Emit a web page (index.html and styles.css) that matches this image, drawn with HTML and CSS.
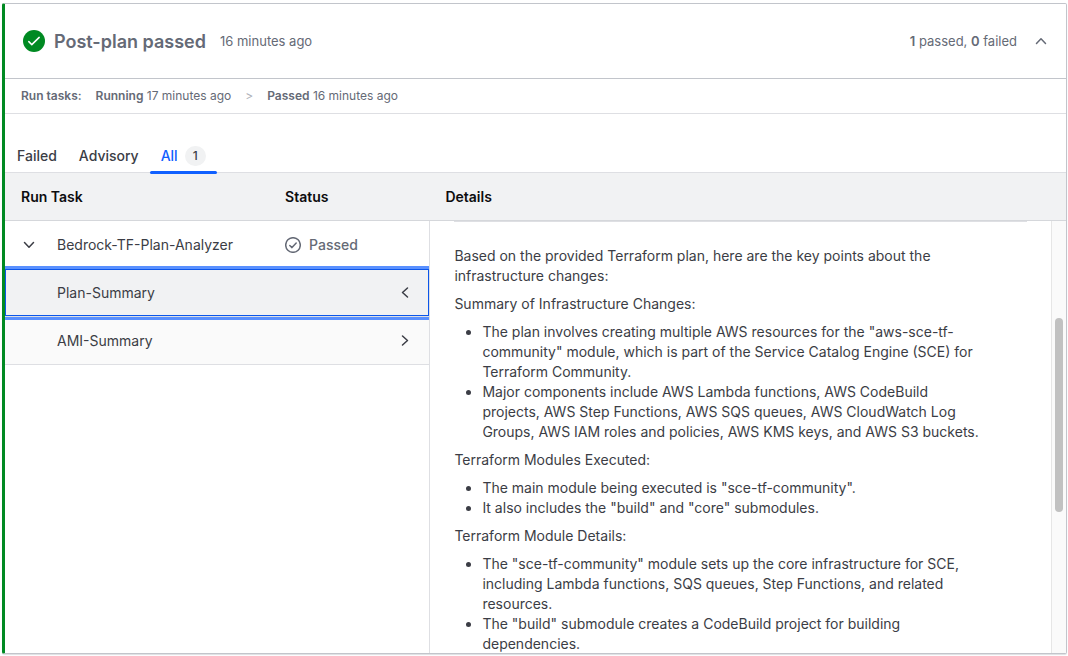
FILE: index.html
```html
<!DOCTYPE html>
<html lang="en">
<head>
<meta charset="utf-8">
<meta name="viewport" content="width=device-width, initial-scale=1">
<title>Post-plan run tasks</title>
<link rel="stylesheet" href="styles.css">
</head>
<body>
<main class="card">
  <header class="card-header">
    <svg class="status-badge" viewBox="0 0 22 22" aria-hidden="true"><circle cx="11" cy="11" r="11" fill="#008a22"/><path d="M5.800 11.600l3 3 7.400-7.200" fill="none" stroke="#fff" stroke-width="1.5" stroke-linecap="round" stroke-linejoin="round"/></svg>
    <h1 class="title">Post-plan passed</h1>
    <span class="time">16 minutes ago</span>
    <span class="totals"><b>1</b> passed, <b>0</b> failed</span>
    <button class="icon-button" type="button" aria-label="Collapse">
      <svg class="icon" viewBox="0 0 16 16"><path d="M3.500 10.500L8 5.800l4.500 4.700"/></svg>
    </button>
  </header>

  <div class="timeline">
    <b class="timeline-label">Run tasks:</b>
    <span><b>Running</b> 17 minutes ago</span>
    <span class="separator">&gt;</span>
    <span><b>Passed</b> 16 minutes ago</span>
  </div>

  <nav class="tabs" role="tablist">
    <button class="tab" type="button" role="tab">Failed</button>
    <button class="tab" type="button" role="tab">Advisory</button>
    <button class="tab tab-active" type="button" role="tab" aria-selected="true">All <span class="count">1</span></button>
  </nav>

  <div class="panes">
    <section class="tasks">
      <table class="task-table">
        <thead>
          <tr><th class="col-task" scope="col">Run Task</th><th scope="col">Status</th></tr>
        </thead>
        <tbody>
          <tr>
            <td>
              <div class="task">
                <button class="icon-button dark" type="button" aria-label="Toggle outcomes">
                  <svg class="icon" viewBox="0 0 16 16"><path d="M3.500 5.500L8 10.200l4.500-4.700"/></svg>
                </button>
                <span>Bedrock-TF-Plan-Analyzer</span>
              </div>
            </td>
            <td>
              <div class="status">
                <svg class="icon" viewBox="0 0 16 16"><circle cx="8" cy="8" r="7.300"/><path d="M4.800 8.500l2.200 2.100 4.200-4.600"/></svg>
                Passed
              </div>
            </td>
          </tr>
          <tr>
            <td class="outcome-cell selected" colspan="2">
              <button class="outcome" type="button">Plan-Summary
                <svg class="icon" viewBox="0 0 16 16"><path d="M10.500 3L5.500 7.500l5 4.500"/></svg>
              </button>
            </td>
          </tr>
          <tr>
            <td class="outcome-cell" colspan="2">
              <button class="outcome" type="button">AMI-Summary
                <svg class="icon" viewBox="0 0 16 16"><path d="M5.500 3l5 4.500-5 4.500"/></svg>
              </button>
            </td>
          </tr>
        </tbody>
      </table>
    </section>

    <section class="details">
      <h2 class="details-heading">Details</h2>
      <div class="details-body">
        <article class="summary">
          <hr class="rule">
          <div class="prose">
            <p>Based on the provided Terraform plan, here are the key points about the infrastructure changes:</p>
            <p>Summary of Infrastructure Changes:</p>
            <ul>
              <li>The plan involves creating multiple AWS resources for the "aws-sce-tf-community" module, which is part of the Service Catalog Engine (SCE) for Terraform Community.</li>
              <li>Major components include AWS Lambda functions, AWS CodeBuild projects, AWS Step Functions, AWS SQS queues, AWS CloudWatch Log Groups, AWS IAM roles and policies, AWS KMS keys, and AWS S3 buckets.</li>
            </ul>
            <p>Terraform Modules Executed:</p>
            <ul>
              <li>The main module being executed is "sce-tf-community".</li>
              <li>It also includes the "build" and "core" submodules.</li>
            </ul>
            <p>Terraform Module Details:</p>
            <ul>
              <li>The "sce-tf-community" module sets up the core infrastructure for SCE, including Lambda functions, SQS queues, Step Functions, and related resources.</li>
              <li>The "build" submodule creates a CodeBuild project for building dependencies.</li>
            </ul>
          </div>
        </article>
        <div class="scroll-track" aria-hidden="true">
          <div class="scroll-space-before"></div>
          <div class="scroll-thumb"></div>
          <div class="scroll-space-after"></div>
        </div>
      </div>
    </section>
  </div>
</main>
</body>
</html>
```
FILE: styles.css
```css
* { box-sizing: border-box; }

body {
  display: flex;
  height: 100vh;
  margin: 0;
  padding: 3px 1px 2px 2px;
  background: #fff;
  color: #3b3d45;
  font-family: Inter, "Liberation Sans", sans-serif;
  font-size: 14px;
  line-height: 20px;
}

button {
  margin: 0;
  padding: 0;
  border: 0;
  background: none;
  color: inherit;
  font: inherit;
  cursor: pointer;
}

b { font-weight: 600; }

.card {
  display: flex;
  flex: 1;
  flex-direction: column;
  min-width: 0;
  overflow: hidden;
  border: 1px solid #c2c5cb;
  border-left: 3px solid #008a22;
  border-radius: 2px;
  box-shadow: 0 1px 1px #dedfe3;
}

.icon {
  display: block;
  flex: none;
  width: 16px;
  height: 16px;
  fill: none;
  stroke: currentColor;
  stroke-width: 1.5;
  stroke-linecap: round;
  stroke-linejoin: round;
}

.icon-button { color: #656a76; }
.icon-button.dark { color: #3b3d45; }

.card-header {
  display: flex;
  flex: none;
  align-items: center;
  height: 75px;
  padding: 0 17px 0 18px;
  border-bottom: 1px solid #c2c5cb;
  color: #656a76;
  font-size: 13px;
}

.status-badge {
  width: 22px;
  height: 22px;
  margin-right: 9px;
}

.title {
  margin: 0 14px 0 0;
  padding-top: 2px;
  font-size: 18px;
  font-weight: 600;
  line-height: 24px;
}

.totals { margin: 0 16px 0 auto; }

.timeline {
  display: flex;
  flex: none;
  align-items: center;
  height: 35px;
  padding: 0 16px;
  gap: 14px;
  border-bottom: 1px solid #dedfe3;
  color: #656a76;
  font-size: 12px;
}

.separator { color: #b0b3ba; }

.tabs {
  display: flex;
  flex: none;
  align-items: flex-end;
  height: 59px;
  padding-left: 1px;
  border-bottom: 1px solid #dedfe3;
}

.tab {
  display: flex;
  align-items: center;
  height: 32px;
  gap: 7px;
  padding: 0 11px;
  font-weight: 500;
}

.tab-active {
  position: relative;
  color: #1060ff;
}

.tab-active::after {
  position: absolute;
  right: 0;
  bottom: -2px;
  left: 0;
  height: 3px;
  border-radius: 2px;
  background: #1060ff;
  content: "";
}

.count {
  padding: 0 8px;
  border-radius: 10px;
  background: #f1f2f3;
  color: #3b3d45;
  font-size: 12px;
}

.panes {
  display: flex;
  flex: 1;
  min-height: 0;
}

.tasks {
  flex: 0 0 40%;
  overflow: hidden;
}

.task-table {
  width: 100%;
  border-spacing: 0;
  table-layout: fixed;
}

.task-table th,
.details-heading {
  height: 48px;
  margin: 0;
  border-bottom: 1px solid #d5d7db;
  background: #f1f2f3;
  color: #0c0c0e;
  font-size: 14px;
  font-weight: 600;
  line-height: 20px;
  text-align: left;
}

.task-table th { padding: 0; }
.task-table .col-task { width: 66%; padding-left: 16px; }

.task-table td {
  height: 48px;
  padding: 0;
}

.task {
  display: flex;
  align-items: center;
  gap: 20px;
  padding-left: 16px;
}

.status {
  display: flex;
  align-items: center;
  gap: 8px;
  color: #656a76;
  font-weight: 500;
}

.outcome-cell {
  border-bottom: 1px solid #dedfe3;
  background: #fafafa;
}

.outcome {
  display: flex;
  align-items: center;
  justify-content: space-between;
  width: 100%;
  height: 47px;
  padding: 0 16px 0 52px;
}

.selected {
  position: relative;
  z-index: 1;
  box-shadow: 0 0 0 3px #5990ff;
}

.selected .outcome {
  border: 1px solid #0c56e9;
  padding: 0 15px 0 51px;
  background: #f1f2f3;
}

.details {
  display: flex;
  flex: 1;
  flex-direction: column;
  min-width: 0;
}

.details-heading {
  flex: none;
  padding: 14px 16px 0;
}

.details-body {
  display: flex;
  flex: 1;
  min-height: 0;
  border-left: 1px solid #dedfe3;
}

.summary {
  flex: 1;
  padding: 0 24px;
  overflow: hidden;
}

.rule {
  height: 1px;
  margin: 0 0 24px;
  border: 0;
  background: #dedfe3;
}

.prose { padding-right: 44px; }
.prose p { margin: 0 0 8px; }
.prose ul { margin: 0 0 8px; padding-left: 28px; }

.scroll-track {
  display: flex;
  flex: 0 0 15px;
  flex-direction: column;
  padding: 0 3px;
  border-left: 1px solid #e6e6e6;
  background: #fafafa;
}

.scroll-space-before { flex: 97; }
.scroll-space-after { flex: 141; }

.scroll-thumb {
  flex: 194;
  border-radius: 4px;
  background: #c1c1c1;
}
```
